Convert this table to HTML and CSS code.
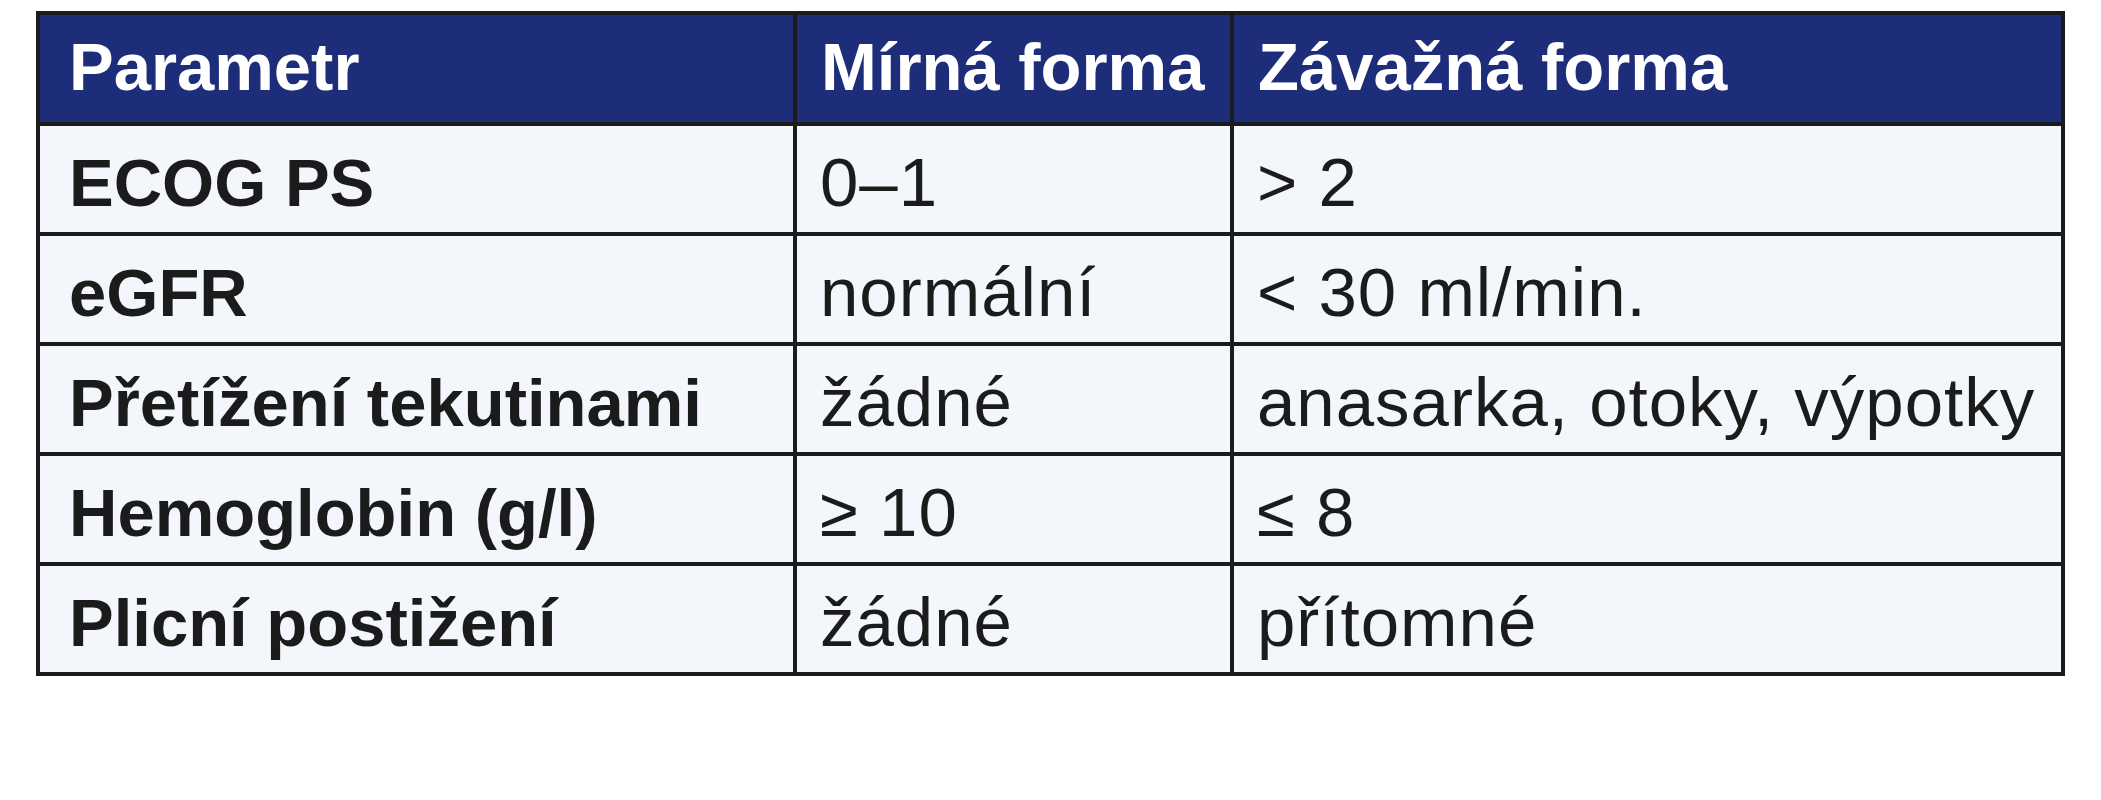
FILE: index.html
```html
<!DOCTYPE html>
<html lang="cs">
<head>
<meta charset="utf-8">
<title>Parametry</title>
<link rel="stylesheet" href="styles.css">
</head>
<body>
<table class="params">
  <colgroup>
    <col class="c1">
    <col class="c2">
    <col class="c3">
  </colgroup>
  <thead>
    <tr><th>Parametr</th><th>Mírná forma</th><th>Závažná forma</th></tr>
  </thead>
  <tbody>
    <tr><td class="label">ECOG PS</td><td>0–1</td><td>&gt; 2</td></tr>
    <tr><td class="label">eGFR</td><td>normální</td><td>&lt; 30 ml/min.</td></tr>
    <tr><td class="label">Přetížení tekutinami</td><td>žádné</td><td>anasarka, otoky, výpotky</td></tr>
    <tr><td class="label">Hemoglobin (g/l)</td><td>≥ 10</td><td>≤ 8</td></tr>
    <tr><td class="label">Plicní postižení</td><td>žádné</td><td>přítomné</td></tr>
  </tbody>
</table>
</body>
</html>
```
FILE: styles.css
```css
html, body {
  margin: 0;
  padding: 0;
  background: #ffffff;
}

body {
  font-family: "Liberation Sans", Arial, sans-serif;
  color: #1b1b1b;
}

.params {
  margin: 11px 0 0 36px;
  width: 2029px;
  border-collapse: collapse;
  table-layout: fixed;
  border: 4px solid #1b1b1b;
}

.c1 { width: 757px; }
.c2 { width: 437px; }
.c3 { width: auto; }

.params th,
.params td {
  border: 4px solid #1b1b1b;
  text-align: left;
  vertical-align: middle;
  white-space: nowrap;
  line-height: 1;
}

.params th {
  height: 103px;
  padding: 0 0 4px 29px;
  background: #1e2d7a;
  color: #ffffff;
  font-size: 67px;
  font-weight: 700;
}

.params th + th { padding-left: 24px; }

.params td {
  height: 99px;
  padding: 7px 0 0 23px;
  background: #f3f7fb;
  font-size: 69px;
  letter-spacing: 1px;
  font-weight: 400;
}

.params td.label {
  padding-left: 29px;
  font-size: 67px;
  letter-spacing: 0;
  font-weight: 700;
}
```
